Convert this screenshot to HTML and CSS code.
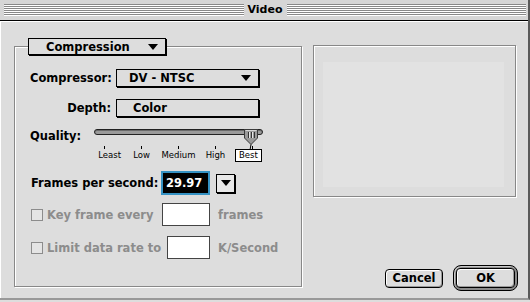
FILE: index.html
```
<!DOCTYPE html>
<html lang="en">
<head>
    <meta charset="UTF-8">
    <title>Video</title>
    <link rel="stylesheet" href="styles.css">
</head>
<body>
    <div class="window">
        <div class="titlebar">
            <span class="stripes"></span>
            <span class="title">Video</span>
            <span class="stripes"></span>
        </div>

        <div class="content">
            <!-- Compression settings -->
            <div class="group">
                <div class="popup legend"><span>Compression</span><i class="arrow"></i></div>

                <div class="row row-compressor">
                    <span class="label">Compressor:</span>
                    <div class="popup wide"><span>DV - NTSC</span><i class="arrow"></i></div>
                </div>

                <div class="row row-depth">
                    <span class="label">Depth:</span>
                    <div class="popup wide depth"><span>Color</span></div>
                </div>

                <div class="quality">
                    <span class="quality-label">Quality:</span>
                    <div class="slider">
                        <div class="track-wrap">
                            <div class="track"></div>
                            <svg class="thumb" width="14" height="21" viewBox="0 0 14 21">
                                <path d="M0.5 0.5 H13.5 V9 L7 15.5 L0.5 9 Z" fill="#9a9a9a" stroke="#3a3a3a"/>
                                <path d="M1.5 1.5 H12.5" stroke="#d6d6d6"/>
                                <path d="M4.5 3 V9 M7.5 3 V9 M10.5 3 V9" stroke="#333"/>
                                <path d="M5.5 3 V9 M8.5 3 V9" stroke="#e6e6e6"/>
                                <path d="M7 15.5 L6 21" stroke="#000"/>
                            </svg>
                        </div>
                        <div class="ticks"><i></i><i></i><i></i><i></i><i></i></div>
                        <div class="tick-labels">
                            <span class="least">Least</span>
                            <span>Low</span>
                            <span>Medium</span>
                            <span>High</span>
                            <span class="best">Best</span>
                        </div>
                    </div>
                </div>

                <div class="row row-fps">
                    <span class="fps-label">Frames per second:</span>
                    <div class="field focused">29.97</div>
                    <div class="arrow-btn"><i class="arrow"></i></div>
                </div>

                <div class="row row-key disabled">
                    <span class="checkbox"></span>
                    <span class="key-label">Key frame every</span>
                    <div class="field key-field"></div>
                    <span class="unit">frames</span>
                </div>

                <div class="row row-limit disabled">
                    <span class="checkbox"></span>
                    <span class="limit-label">Limit data rate to</span>
                    <div class="field limit-field"></div>
                    <span class="unit">K/Second</span>
                </div>
            </div>

            <!-- Preview and buttons -->
            <div class="side">
                <div class="preview">
                    <div class="preview-inner"></div>
                </div>
                <div class="buttons">
                    <button class="btn cancel">Cancel</button>
                    <div class="ok-ring"><button class="btn ok">OK</button></div>
                </div>
            </div>
        </div>
    </div>
</body>
</html>
```

FILE: styles.css
```
/* Global */
* {
    box-sizing: border-box;
    margin: 0;
    padding: 0;
}

body {
    background: #dddddd;
    font-family: "DejaVu Sans", sans-serif;
    font-weight: bold;
    font-size: 11.5px;
    color: #000;
}

.window {
    width: 530px;
    height: 300px;
    border-right: 2px solid #5a5a5a;
    border-bottom: 2px solid #999;
    display: flex;
    flex-direction: column;
}

/* Title bar */
.titlebar {
    height: 21px;
    display: flex;
    padding: 0 2px 0 4px;
    background: #d6d6d6;
    border-bottom: 1px solid #000;
}

.stripes {
    flex: 1;
    height: 12px;
    margin-top: 4px;
    background: repeating-linear-gradient(to bottom, #888 0, #888 1px, #fff 1px, #fff 2px);
}

.title {
    padding: 0 4px;
    font-size: 11px;
    line-height: 19px;
}

/* Content */
.content {
    flex: 1;
    display: flex;
    border-top: 1px solid #fff;
    border-left: 1px solid #fff;
    padding: 0 0 7px 13px;
}

.group {
    margin-top: 24px;
    width: 288px;
    height: 241px;
    border: 1px solid #888;
    box-shadow: 1px 1px 0 #fff, inset 1px 1px 0 #fff;
    padding-left: 15px;
    display: flex;
    flex-direction: column;
}

/* Popup menus */
.popup {
    display: flex;
    align-items: center;
    background: #dddddd;
    border: 1px solid #000;
    box-shadow: 1px 1px 0 #000;
}

.popup span {
    flex: 1;
}

.arrow {
    display: block;
    width: 0;
    height: 0;
    border-left: 5.5px solid transparent;
    border-right: 5.5px solid transparent;
    border-top: 6px solid #000;
}

.legend {
    margin: -9px 0 0 -2px;
    width: 138px;
    height: 17px;
    padding: 0 7px 0 17px;
}

.row {
    display: flex;
    align-items: center;
}

.label {
    width: 81px;
    text-align: right;
    margin-right: 5px;
}

.row-compressor {
    margin-top: 14px;
    height: 18px;
}

.row-depth {
    margin-top: 12px;
    height: 18px;
}

.wide {
    width: 143px;
    height: 18px;
    padding: 0 7px 0 12px;
}

.depth {
    padding-left: 16px;
}

/* Quality slider */
.quality {
    margin-top: 8px;
    display: flex;
}

.quality-label {
    width: 64px;
    padding-top: 4px;
    line-height: 14px;
}

.slider {
    width: 170px;
}

.track-wrap {
    position: relative;
    height: 16px;
}

.track {
    margin-top: 4px;
    width: 169px;
    height: 6px;
    border: 1px solid #222;
    border-radius: 3px;
    background: #9a9a9a;
    box-shadow: inset 0 1px 0 #6a6a6a;
}

.thumb {
    position: absolute;
    left: 150px;
    top: 0;
}

.ticks {
    display: flex;
    justify-content: space-between;
    margin: 1px 0 0 10px;
    width: 149px;
    height: 3px;
}

.ticks i {
    width: 1px;
    background: #000;
}

.tick-labels {
    display: grid;
    grid-template-columns: repeat(5, 37px);
    margin-left: -8px;
    height: 13px;
    align-items: center;
    font-weight: normal;
    font-size: 8.5px;
    line-height: 11px;
    text-align: center;
}

.least {
    justify-self: end;
    margin-right: 2px;
}

.best {
    justify-self: start;
    margin-left: 1px;
    height: 13px;
    padding: 0 3px;
    border: 1px solid #000;
    background: #fff;
}

/* Frames per second */
.row-fps {
    margin-top: 9px;
    height: 24px;
}

.fps-label {
    width: 133px;
    padding-left: 1px;
}

.field {
    background: #fff;
    border: 1px solid #444;
}

.focused {
    width: 45px;
    height: 20px;
    background: #000;
    color: #fff;
    border: 1px solid #000;
    box-shadow: 0 0 0 2px #3592c4;
    padding-left: 2px;
    line-height: 18px;
}

.arrow-btn {
    margin-left: 8px;
    width: 19px;
    height: 19px;
    border: 1px solid #000;
    box-shadow: 1px 1px 0 #000;
    background: #e8e8e8;
    display: flex;
    align-items: center;
    justify-content: center;
}

/* Disabled rows */
.disabled {
    color: #8c8c8c;
    height: 23px;
}

.row-key {
    margin-top: 8px;
}

.row-limit {
    margin-top: 10px;
}

.checkbox {
    width: 12px;
    height: 12px;
    margin: 0 4px 0 1px;
    border: 1px solid #8c8c8c;
    background: #e4e4e4;
}

.key-label {
    width: 115px;
}

.limit-label {
    width: 120px;
}

.key-field {
    width: 48px;
    height: 23px;
}

.limit-field {
    width: 43px;
    height: 23px;
}

.unit {
    margin-left: 8px;
}

/* Right side */
.side {
    margin-left: 11px;
    width: 205px;
    display: flex;
    flex-direction: column;
}

.preview {
    margin-top: 23px;
    width: 203px;
    height: 152px;
    border: 1px solid #888;
    box-shadow: 1px 1px 0 #fff, inset 1px 1px 0 #fff;
    padding: 16px 0 0 9px;
}

.preview-inner {
    width: 181px;
    height: 125px;
    background: #e2e2e2;
}

.buttons {
    margin-top: auto;
    display: flex;
    align-items: center;
    justify-content: flex-end;
}

.btn {
    font-family: "DejaVu Sans", sans-serif;
    font-weight: bold;
    font-size: 11.5px;
    color: #000;
    background: #dddddd;
    border: 1px solid #000;
    border-radius: 4px;
    box-shadow: inset 1px 1px 0 #fff, inset -1px -1px 0 #999;
}

.cancel {
    width: 58px;
    height: 19px;
}

.ok-ring {
    margin-left: 10px;
    width: 65px;
    height: 26px;
    padding: 2px;
    border: 1px solid #000;
    border-radius: 8px;
    background: #8a8a8a;
    box-shadow: inset 1px 1px 0 #c8c8c8;
}

.ok {
    width: 100%;
    height: 100%;
}
```
